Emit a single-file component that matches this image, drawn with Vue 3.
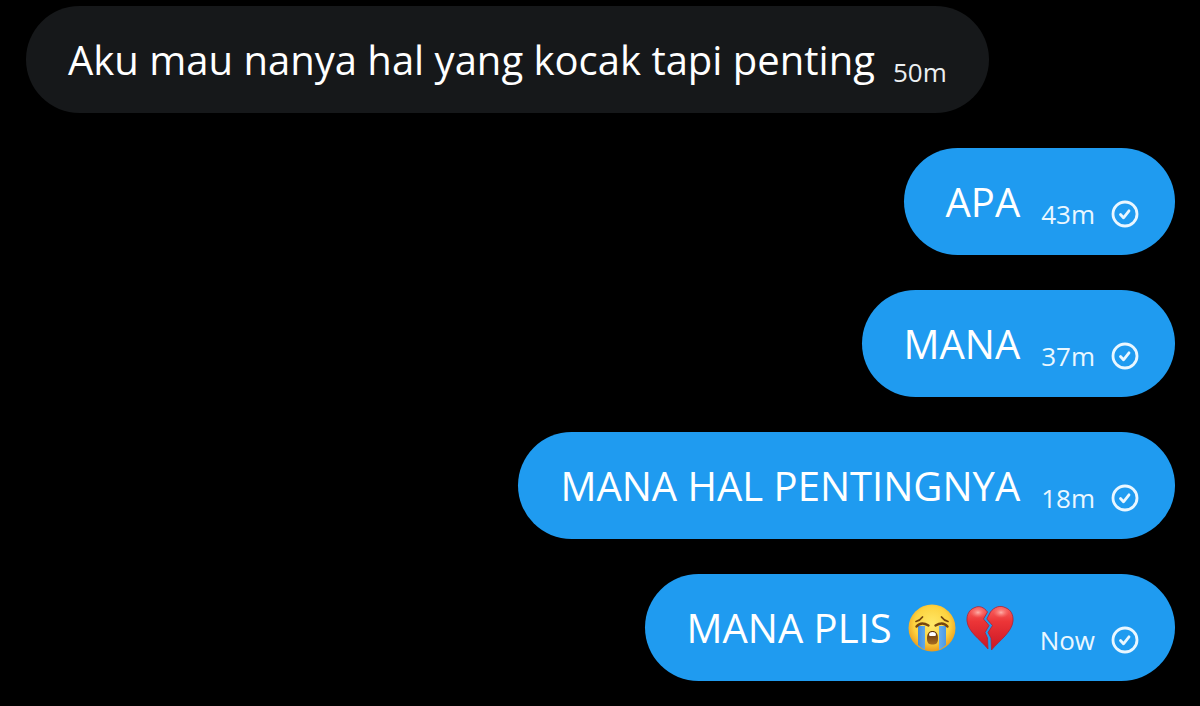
<script setup>
const messages = [
  { id: 1, sent: false, text: 'Aku mau nanya hal yang kocak tapi penting', time: '50m' },
  { id: 2, sent: true, text: 'APA', time: '43m' },
  { id: 3, sent: true, text: 'MANA', time: '37m' },
  { id: 4, sent: true, text: 'MANA HAL PENTINGNYA', time: '18m' },
  { id: 5, sent: true, text: 'MANA PLIS', time: 'Now', emoji: true },
]
</script>

<template>
  <main class="chat">
    <article v-for="m in messages" :key="m.id" class="bubble" :class="{ sent: m.sent }">
      <p class="text">
        <span>{{ m.text }}</span>
        <span v-if="m.emoji" class="emojis">
          <svg class="emoji" viewBox="0 0 48 48" role="img" aria-label="loudly crying face">
            <defs>
              <radialGradient id="face" cx="50%" cy="42%" r="58%">
                <stop offset="0" stop-color="#ffe868" />
                <stop offset="0.65" stop-color="#fdd340" />
                <stop offset="1" stop-color="#e99a1c" />
              </radialGradient>
              <linearGradient id="tear" x1="0" x2="1" y1="0" y2="0">
                <stop offset="0" stop-color="#3f8fe0" />
                <stop offset="0.5" stop-color="#7fc2f7" />
                <stop offset="1" stop-color="#4a9ae6" />
              </linearGradient>
              <linearGradient id="mouth" x1="0" x2="0" y1="0" y2="1">
                <stop offset="0" stop-color="#5c3009" />
                <stop offset="1" stop-color="#a86d22" />
              </linearGradient>
            </defs>
            <circle cx="24" cy="24" r="23.500" fill="url(#face)" />
            <path d="M10 22h7v24q-4-2-7-5zM31 22h7v19q-3 3-7 5z" fill="url(#tear)" />
            <g fill="none" stroke="#76460e" stroke-linecap="round">
              <path d="M8 17.500Q12 16.500 14.500 13M40 17.500Q36 16.500 33.500 13" stroke-width="1.700" />
              <path d="M8.500 22.500Q13 17 20.500 21.500M27.500 21.500Q35 17 39.500 22.500" stroke-width="2.400" />
            </g>
            <path d="M19 34.500C19 29.500 21 27 24.500 27S30 29.500 30 34.500 28 40.500 24.500 40.500 19 39.500 19 34.500Z" fill="url(#mouth)" />
            <path d="M21 30Q21.500 28 24.500 28T28 30L27.500 32h-6z" fill="#fff" />
          </svg>
          <svg class="emoji" viewBox="0 0 48 48" role="img" aria-label="broken heart">
            <defs>
              <linearGradient id="heart" x1="0" x2="0" y1="0" y2="1">
                <stop offset="0" stop-color="#f96562" />
                <stop offset="0.35" stop-color="#ec3537" />
                <stop offset="1" stop-color="#c91625" />
              </linearGradient>
              <radialGradient id="shine">
                <stop offset="0" stop-color="#ffc1b9" stop-opacity="0.850" />
                <stop offset="1" stop-color="#ff8178" stop-opacity="0" />
              </radialGradient>
            </defs>
            <g fill="url(#heart)" stroke="#b32131" stroke-width="0.800" stroke-linejoin="round">
              <path d="M21.500 8C18 3 13 1.500 9 3.500 3 5.500 0.500 11 1 17 2 28 14 35 22 45L21.500 34 19 28.500 23 21.500 17.500 15Z" />
              <path d="M24.500 8C28 3 34 1 39 3.500 45 5.500 47.500 11 47 17 46 28 34 36 25.500 46L25 34 22 28.500 26.500 21.500 20.800 15Z" />
            </g>
            <ellipse cx="12" cy="8.500" rx="8" ry="5.500" fill="url(#shine)" />
            <ellipse cx="35" cy="8.500" rx="8" ry="5.500" fill="url(#shine)" />
          </svg>
        </span>
      </p>
      <div class="meta">
        <time>{{ m.time }}</time>
        <svg v-if="m.sent" class="check" viewBox="0 0 28 28" role="img" aria-label="Sent">
          <circle cx="14" cy="14" r="12" />
          <path d="M9.500 14.500l3 3.300 5.500-7" />
        </svg>
      </div>
    </article>
  </main>
</template>

<style>
body {
  background: #000;
}
</style>

<style scoped>
.chat {
  display: flex;
  flex-direction: column;
  align-items: flex-start;
  gap: 35px;
  padding: 6px 25px 24px 26px;
  color: #fff;
  font-family: "Open Sans", "Noto Sans", sans-serif;
}

.bubble {
  display: flex;
  align-items: flex-end;
  gap: 18px;
  box-sizing: border-box;
  padding: 26px 42px 25px;
  border-radius: 54px;
  background: #16181a;
}

.sent {
  align-self: flex-end;
  gap: 21px;
  padding-right: 36px;
  background: #1f9bf0;
}

.text {
  display: flex;
  align-items: center;
  gap: 16px;
  margin: 0;
  font-size: 40px;
  line-height: 56px;
}

.emojis {
  display: flex;
  gap: 10px;
  padding-right: 5px;
}

.emoji {
  width: 48px;
  height: 48px;
}

.meta {
  display: flex;
  align-items: center;
  gap: 16px;
  color: #eceff2;
  font-size: 26px;
  line-height: 32px;
}

.sent .meta {
  color: #eaf7ff;
}

.check {
  width: 28px;
  height: 28px;
  fill: none;
  stroke: currentColor;
  stroke-width: 2.8;
  stroke-linecap: round;
  stroke-linejoin: round;
}
</style>
